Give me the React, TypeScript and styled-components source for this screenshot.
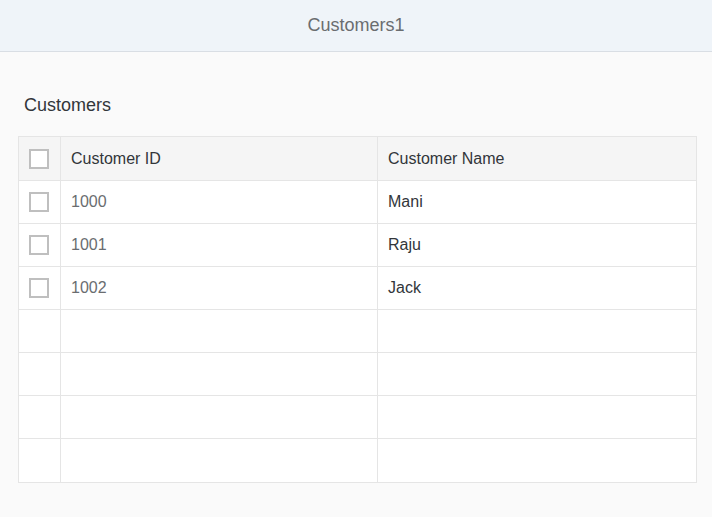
import React from "react";
import styled, { createGlobalStyle } from "styled-components";

const Global = createGlobalStyle`
  html, body { margin: 0; padding: 0; background: #fafafa; font-family: "Liberation Sans", Arial, sans-serif; }
`;

const Header = styled.header`
  height: 51px;
  background: #eff4f9;
  border-bottom: 1px solid #d9dee4;
  display: flex;
  align-items: center;
  justify-content: center;
  font-size: 18px;
  color: #6a6d70;
`;

const Content = styled.main`
  padding: 42px 15px 0 18px;
`;

const Title = styled.h2`
  margin: 0 0 20px 6px;
  font-size: 18px;
  font-weight: normal;
  color: #32363a;
  line-height: 22px;
`;

const Grid = styled.div`
  display: grid;
  grid-template-columns: 42px 317px 1fr;
  border-top: 1px solid #e5e5e5;
  border-left: 1px solid #e5e5e5;
`;

const Cell = styled.div<{ $head?: boolean; $tall?: boolean; $color?: string }>`
  height: ${(p) => (p.$tall ? 43 : 42)}px;
  display: flex;
  align-items: center;
  padding-left: ${(p) => (p.$color === undefined && !p.$head ? 0 : 10)}px;
  background: ${(p) => (p.$head ? "#f5f5f5" : "#ffffff")};
  border-right: 1px solid #e5e5e5;
  border-bottom: 1px solid #e5e5e5;
  font-size: 16px;
  color: ${(p) => p.$color ?? "#32363a"};
`;

const SelCell = styled(Cell)`
  padding-left: 10px;
`;

const Box = styled.span`
  width: 16px;
  height: 16px;
  border: 2px solid #bfbfbf;
  background: #fff;
`;

const rows = [
  ["1000", "Mani"],
  ["1001", "Raju"],
  ["1002", "Jack"],
];

export default function App() {
  return (
    <>
      <Global />
      <Header>Customers1</Header>
      <Content>
        <Title>Customers</Title>
        <Grid>
          <SelCell $head $tall><Box /></SelCell>
          <Cell $head $tall>Customer ID</Cell>
          <Cell $head $tall>Customer Name</Cell>
          {rows.map(([id, name]) => (
            <React.Fragment key={id}>
              <SelCell><Box /></SelCell>
              <Cell $color="#6a6d70">{id}</Cell>
              <Cell $color="#32363a">{name}</Cell>
            </React.Fragment>
          ))}
          {[0, 1, 2, 3].map((i) => (
            <React.Fragment key={i}>
              <Cell $tall={i === 3} />
              <Cell $tall={i === 3} />
              <Cell $tall={i === 3} />
            </React.Fragment>
          ))}
        </Grid>
      </Content>
    </>
  );
}
